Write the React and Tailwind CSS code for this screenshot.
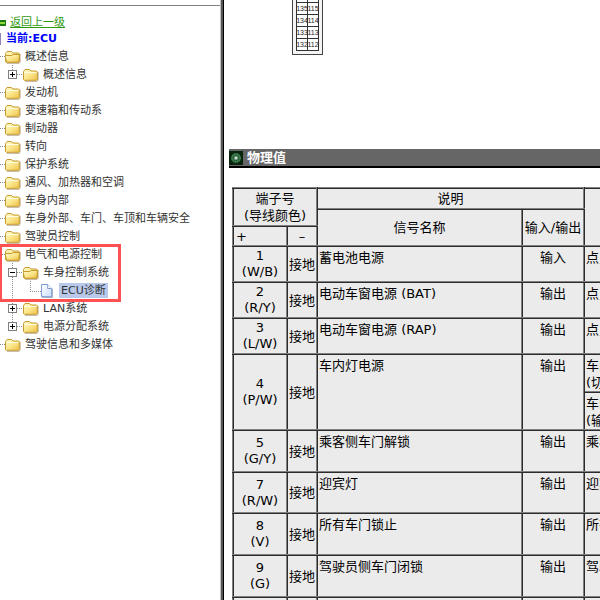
import React from 'react';

const TREE = [
  { level: 1, icon: 'open', label: '概述信息' },
  { level: 2, icon: 'closed', label: '概述信息', toggle: 'plus', last: true },
  { level: 1, icon: 'closed', label: '发动机' },
  { level: 1, icon: 'closed', label: '变速箱和传动系' },
  { level: 1, icon: 'closed', label: '制动器' },
  { level: 1, icon: 'closed', label: '转向' },
  { level: 1, icon: 'closed', label: '保护系统' },
  { level: 1, icon: 'closed', label: '通风、加热器和空调' },
  { level: 1, icon: 'closed', label: '车身内部' },
  { level: 1, icon: 'closed', label: '车身外部、车门、车顶和车辆安全' },
  { level: 1, icon: 'closed', label: '驾驶员控制' },
  { level: 1, icon: 'open', label: '电气和电源控制' },
  { level: 2, icon: 'open', label: '车身控制系统', toggle: 'minus' },
  { level: 3, icon: 'page', label: 'ECU诊断', selected: true },
  { level: 2, icon: 'closed', label: 'LAN系统', toggle: 'plus' },
  { level: 2, icon: 'closed', label: '电源分配系统', toggle: 'plus', last: true },
  { level: 1, icon: 'closed', label: '驾驶信息和多媒体' },
];

const PINS = [
  ['136', '116'],
  ['135', '115'],
  ['134', '114'],
  ['133', '113'],
  ['132', '112'],
];

const SIGNALS = [
  { pin: '1', wire: '(W/B)', name: '蓄电池电源', io: '输入', cond: ['点火'], height: 'h-[36px]' },
  { pin: '2', wire: '(R/Y)', name: '电动车窗电源 (BAT)', io: '输出', cond: ['点火'], height: 'h-[36px]' },
  { pin: '3', wire: '(L/W)', name: '电动车窗电源 (RAP)', io: '输出', cond: ['点火'], height: 'h-[36px]' },
  { pin: '4', wire: '(P/W)', name: '车内灯电源', io: '输出', cond: ['车内\n(切断)', '车内\n(输出)'], height: 'h-[38px]' },
  { pin: '5', wire: '(G/Y)', name: '乘客侧车门解锁', io: '输出', cond: ['乘客'], height: 'h-[42px]' },
  { pin: '7', wire: '(R/W)', name: '迎宾灯', io: '输出', cond: ['迎宾'], height: 'h-[41px]' },
  { pin: '8', wire: '(V)', name: '所有车门锁止', io: '输出', cond: ['所有'], height: 'h-[42px]' },
  { pin: '9', wire: '(G)', name: '驾驶员侧车门闭锁', io: '输出', cond: ['驾驶'], height: 'h-[42px]' },
  { pin: '', wire: '', name: '', io: '', cond: [''], height: 'h-[42px]' },
];

const CELL = 'border-2 border-[#808080] [border-style:ridge]';

const FolderIcon = ({ open }) => (
  <svg width="16" height="16" viewBox="0 -2 16 16" className="shrink-0" aria-hidden="true">
    <defs>
      <linearGradient id="folder" x1="0" y1="0" x2="1" y2="1">
        <stop offset="0" stopColor="#fffbd0" />
        <stop offset="0.5" stopColor="#fbe68a" />
        <stop offset="1" stopColor="#edc04a" />
      </linearGradient>
    </defs>
    <path d="M2 13.3h12.2l.9-1.2V4" fill="none" stroke="#8a7a50" strokeOpacity="0.6" />
    <path
      d="M.5 11.5v-8L2 1.5h4.5L8 3h5.5l.8.8v7.7l-.8.8H1.3z"
      fill="url(#folder)"
      stroke="#c79a2e"
    />
    {open ? (
      <path d="M1.6 12.2.2 6.6.9 5.5h5.9L8.2 4.5h6.4l-.9 7.7z" fill="url(#folder)" stroke="#c79a2e" />
    ) : (
      <path d="M1.5 4.5h12" fill="none" stroke="#fffbe0" />
    )}
  </svg>
);

const PageIcon = () => (
  <svg width="12" height="16" viewBox="0 -2 12 16" className="shrink-0" aria-hidden="true">
    <defs>
      <linearGradient id="page" x1="0" y1="0" x2="1" y2="1">
        <stop offset="0" stopColor="#fff" />
        <stop offset="1" stopColor="#c9dcff" />
      </linearGradient>
    </defs>
    <path d="M1 13.5h10.5V5" fill="none" stroke="#8a97b5" strokeOpacity="0.7" />
    <path d="M.5.5h6.2l4 4v8.2H.5z" fill="url(#page)" stroke="#7f9bd0" />
    <path d="M6.7.5v4h4" fill="#fff" stroke="#7f9bd0" />
  </svg>
);

const dots = { stroke: '#8c8c8c', strokeDasharray: '1 1', fill: 'none' };

const Branch = ({ node }) => {
  if (node.level === 1) {
    return (
      <svg width="5" height="18" className="shrink-0" aria-hidden="true">
        <path d="M0 9.5h5" {...dots} />
      </svg>
    );
  }
  if (node.level === 3) {
    return (
      <svg width="41" height="18" className="shrink-0" aria-hidden="true">
        <path d="M12.5 0v18M30.5 0v10M30 10.5h11" {...dots} />
      </svg>
    );
  }
  return (
    <svg width="23" height="18" className="shrink-0" aria-hidden="true">
      <path d={node.last ? 'M12.5 0v5M17 9.5h6' : 'M12.5 0v18M17 9.5h6'} {...dots} />
      <rect x="8.5" y="5.5" width="8" height="8" fill="#fff" stroke="#808080" />
      <path d={node.toggle === 'plus' ? 'M10 9.5h5M12.5 7v5' : 'M10 9.5h5'} stroke="#000" />
    </svg>
  );
};

const TreeRow = ({ node }) => (
  <li className="flex h-[18px] items-center">
    <Branch node={node} />
    {node.icon === 'page' ? <PageIcon /> : <FolderIcon open={node.icon === 'open'} />}
    <a
      href="#"
      className={
        node.selected
          ? 'ml-1.5 bg-[#b8c9ec] px-0.5 leading-[15px] text-[#333]'
          : 'ml-1 leading-[15px] text-[#333]'
      }
    >
      {node.label}
    </a>
  </li>
);

const Sidebar = () => (
  <nav className="w-[220px] shrink-0 overflow-hidden whitespace-nowrap pt-[5px] text-[11px]">
    <div className="border-t border-[#808080] pt-[9px]">
      <div className="flex h-4 items-center">
        <svg width="10" height="8" className="shrink-0" aria-hidden="true">
          <path d="M0 1h6v6H0z" fill="#1d7a10" />
          <path d="M0 3h5v2H0z" fill="#8ed83e" />
        </svg>
        <a href="#" className="leading-4 text-[#2f9a10] underline">返回上一级</a>
      </div>
      <div className="flex h-4 items-center">
        <svg width="6" height="12" className="shrink-0" aria-hidden="true">
          <path d="M0 0h1v12H0z" fill="#8f84b4" />
        </svg>
        <span className="font-bold leading-4 text-[#0000ff]">当前:ECU</span>
      </div>
    </div>
    <div className="relative">
      <ul>
        {TREE.map((node, i) => (
          <TreeRow key={i} node={node} />
        ))}
      </ul>
      <div className="pointer-events-none absolute left-[-1px] top-[197px] h-[58px] w-[122px] border-3 border-[#ff5052]" />
    </div>
  </nav>
);

const Connector = () => (
  <div className="ml-[63px] mt-[-11px] w-[31px] border border-[#444] bg-[#f4f4f4] p-[3px] pt-0">
    <table className="w-full table-fixed border-collapse bg-white font-['Liberation_Sans_Narrow','Liberation_Sans',sans-serif] text-[7px] leading-[8px] text-[#222]">
      <tbody>
        {PINS.map((pair) => (
          <tr key={pair[0]} className="h-[12px]">
            {pair.map((pin) => (
              <td key={pin} className="border border-[#333] p-0">
                <div className="flex justify-center">{pin}</div>
              </td>
            ))}
          </tr>
        ))}
      </tbody>
    </table>
  </div>
);

const SectionTitle = () => (
  <div className="flex h-[19px] items-center gap-1 border-b-2 border-black bg-[#666]">
    <svg width="14" height="14" viewBox="0 0 14 14" className="shrink-0" aria-hidden="true">
      <rect width="14" height="14" fill="#08240c" />
      <circle cx="7" cy="7" r="5" fill="#28643a" />
      <circle cx="7" cy="7" r="4" fill="none" stroke="#6fa57c" strokeDasharray="1 1" />
      <circle cx="7" cy="7" r="2" fill="#87a890" />
      <circle cx="7" cy="7" r="1" fill="#e8f2ea" />
    </svg>
    <h2 className="text-[13px] font-bold leading-4 text-white">物理值</h2>
  </div>
);

const SignalTable = () => (
  <table className="w-full table-fixed border-collapse bg-[#ebebeb] text-[13px] leading-[17px] text-black">
    <colgroup>
      <col className="w-[54px]" />
      <col className="w-[30px]" />
      <col className="w-[205px]" />
      <col className="w-[62px]" />
      <col />
    </colgroup>
    <thead>
      <tr className="h-[21px]">
        <th colSpan={2} rowSpan={2} className={`${CELL} p-0 font-normal`}>
          端子号
          <br />
          (导线颜色)
        </th>
        <th colSpan={2} className={`${CELL} p-0 font-normal`}>说明</th>
        <th rowSpan={3} className={`${CELL} p-0`} />
      </tr>
      <tr className="h-[17px]">
        <th rowSpan={2} className={`${CELL} p-0 font-normal`}>信号名称</th>
        <th rowSpan={2} className={`${CELL} whitespace-nowrap p-0 font-normal`}>输入/输出</th>
      </tr>
      <tr className="h-[20px]">
        <th className={`${CELL} px-0.5 py-0 text-left font-normal`}>+</th>
        <th className={`${CELL} p-0 font-normal`}>–</th>
      </tr>
    </thead>
    <tbody>
      {SIGNALS.map((s) => (
        <React.Fragment key={s.pin}>
          {s.cond.map((cond, i) => (
            <tr key={i} className={s.height}>
              {i === 0 && (
                <>
                  <td rowSpan={s.cond.length} className={`${CELL} p-0 text-center leading-4`}>
                    {s.pin}
                    <br />
                    {s.wire}
                  </td>
                  <td rowSpan={s.cond.length} className={`${CELL} whitespace-nowrap p-0 text-center`}>
                    {s.pin && '接地'}
                  </td>
                  <td rowSpan={s.cond.length} className={`${CELL} px-px pb-0 pt-0.5 align-top`}>{s.name}</td>
                  <td rowSpan={s.cond.length} className={`${CELL} px-0 pb-0 pt-0.5 text-center align-top`}>{s.io}</td>
                </>
              )}
              <td className={`${CELL} overflow-hidden whitespace-pre px-px pb-0 pt-0.5 align-top`}>{cond}</td>
            </tr>
          ))}
        </React.Fragment>
      ))}
    </tbody>
  </table>
);

const App = () => {
  return (
    <div className="flex h-screen overflow-hidden bg-white font-['DejaVu_Sans','Noto_Sans_CJK_SC',sans-serif]">
      <Sidebar />
      <div className="w-1 shrink-0 border-l border-r border-l-[#c0c0c0] border-r-black bg-[#555]" />
      <main className="min-w-0 flex-1 overflow-hidden pl-[5px]">
        <div className="flow-root h-[149px]">
          <Connector />
        </div>
        <SectionTitle />
        <div className="ml-[3px] mr-[-200px] mt-[19px]">
          <SignalTable />
        </div>
      </main>
    </div>
  );
};

export default App;
